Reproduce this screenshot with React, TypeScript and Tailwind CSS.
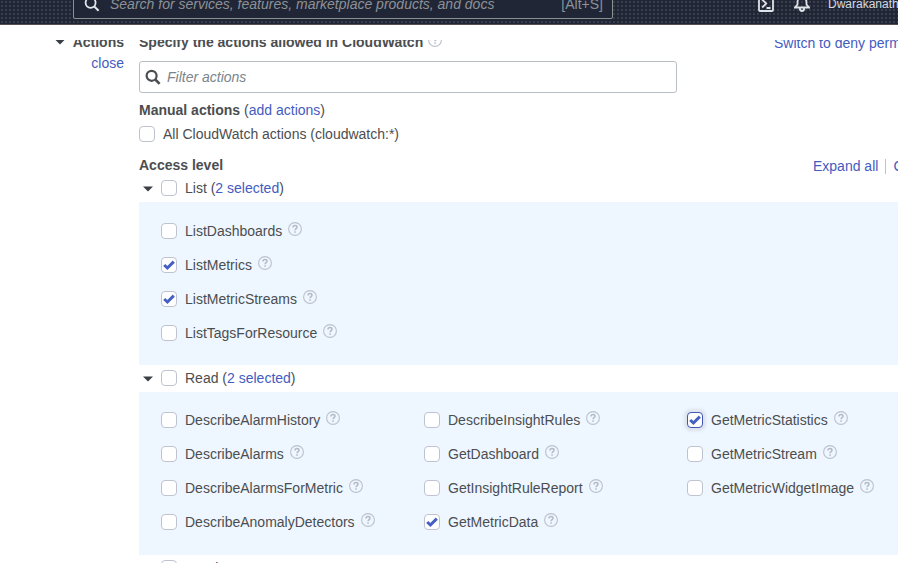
import React from "react";

const FONT = "font-['Liberation_Sans',Arial,sans-serif]";

function Help({ className = "" }: { className?: string }) {
  return (
    <svg width="14" height="14" viewBox="0 0 14 14" fill="none" className={`shrink-0 ${className}`}>
      <circle cx="7" cy="7" r="6.4" stroke="#bcc1cc" strokeWidth="1.1" />
      <path d="M5 5.5C5 4.3 5.8 3.6 7 3.6s2 .7 2 1.7c0 1.3-1.9 1.4-1.9 2.9" stroke="#b4bac6" strokeWidth="1.5" />
      <rect x="6.3" y="9.3" width="1.5" height="1.5" fill="#b4bac6" />
    </svg>
  );
}

function Box({ checked = false, focus = false }: { checked?: boolean; focus?: boolean }) {
  return (
    <span
      className={`flex size-4 shrink-0 items-center justify-center rounded-[4px] border bg-white ${
        focus ? "border-[#3f56b5] shadow-[0_0_3px_3px_#dce3ee]" : "border-[#bfc3cf]"
      }`}
    >
      {checked && (
        <svg width="12" height="12" viewBox="0 0 12 12" className="shrink-0">
          <path d="M1.2 6 4.4 9 10.8 2.6" fill="none" stroke="#4560c4" strokeWidth="3" />
        </svg>
      )}
    </span>
  );
}

function Caret({ className = "" }: { className?: string }) {
  return (
    <svg width="10" height="6" viewBox="0 0 10 6" className={`shrink-0 ${className}`}>
      <path d="M0 .5h10L5 5.5Z" fill="#3b3e43" />
    </svg>
  );
}

function Magnifier({ color, thin = false }: { color: string; thin?: boolean }) {
  return (
    <svg width="16" height="16" viewBox="0 0 16 16" fill="none" stroke={color} className="shrink-0">
      <circle cx="6.6" cy="6.8" r="5" strokeWidth={thin ? 1.8 : 2.2} />
      <path d="m10.3 10.5 4.3 4.3" strokeWidth={thin ? 2 : 2.6} />
    </svg>
  );
}

type Item = { name: string; checked?: boolean; focus?: boolean };

function Action({ name, checked, focus }: Item) {
  return (
    <div className="flex h-[34px] items-center">
      <Box checked={checked} focus={focus} />
      <span className="ml-2">{name}</span>
      <Help className="mb-1 ml-1.5" />
    </div>
  );
}

function GroupHead({ label, count }: { label: string; count?: string }) {
  return (
    <div className="flex h-[27px] shrink-0 items-center pb-px pl-1">
      <Caret className="mt-0.5" />
      <span className="ml-2">
        <Box />
      </span>
      <span className="ml-2">
        {label}
        {count && (
          <>
            {" ("}
            <span className="text-[#435cbf]">{count}</span>)
          </>
        )}
      </span>
    </div>
  );
}

const list: Item[] = [
  { name: "ListDashboards" },
  { name: "ListMetrics", checked: true },
  { name: "ListMetricStreams", checked: true },
  { name: "ListTagsForResource" },
];

const read: Item[][] = [
  [
    { name: "DescribeAlarmHistory" },
    { name: "DescribeAlarms" },
    { name: "DescribeAlarmsForMetric" },
    { name: "DescribeAnomalyDetectors" },
  ],
  [
    { name: "DescribeInsightRules" },
    { name: "GetDashboard" },
    { name: "GetInsightRuleReport" },
    { name: "GetMetricData", checked: true },
  ],
  [
    { name: "GetMetricStatistics", checked: true, focus: true },
    { name: "GetMetricStream" },
    { name: "GetMetricWidgetImage" },
  ],
];

export default function App() {
  return (
    <div className={`flex h-[563px] w-[898px] flex-col overflow-hidden bg-white text-sm leading-5 text-[#4b4e50] ${FONT}`}>
      <header className="flex h-[25px] shrink-0 items-end overflow-hidden border-b border-[#55504f] bg-[#212637] bg-[radial-gradient(circle,#484b55_0.6px,transparent_0.9px)] bg-[size:4px_4px] pb-[5px] pl-[73px]">
        <div className="flex h-[30px] w-[540px] shrink-0 items-center rounded-[2px] border border-[#8b9192] bg-[#212637] pr-[9px] pl-2.5 text-[#8c9296]">
          <Magnifier color="#e3e6ea" thin />
          <span className="ml-2.5 grow italic">Search for services, features, marketplace products, and docs</span>
          <span>[Alt+S]</span>
        </div>
        <div className="ml-[145px] flex h-[30px] shrink-0 items-center text-[#d5d9df]">
          <svg width="16" height="16" viewBox="0 0 16 16" fill="none" stroke="#dfe2e8" strokeWidth="1.8">
            <rect x="1" y="1" width="14" height="14" rx="1" />
            <path d="m4.2 3.5 4 4-4 4M8.5 12h4" />
          </svg>
          <svg width="16" height="16" viewBox="0 0 16 16" fill="none" stroke="#dfe2e8" strokeWidth="1.8" className="ml-5">
            <path d="M1 11.5h14l-2.5-3V6a4.5 4.5 0 0 0-9 0v2.500ZM5.8 12c0 4 4.400 4 4.400 0" />
          </svg>
          <span className="ml-[18px] text-[12px]">Dwarakanath</span>
        </div>
      </header>

      <main className="mt-[15px] flex grow overflow-hidden">
        <aside className="flex w-[124px] shrink-0 flex-col items-end">
          <div className="-mt-2 flex items-center font-bold">
            <Caret />
            <span className="ml-2">Actions</span>
          </div>
          <a className="mt-px text-[#435cbf]">close</a>
        </aside>

        <section className="ml-[15px] flex w-[759px] shrink-0 flex-col">
          <div className="-mt-2 flex h-5 shrink-0">
            <span className="font-bold">Specify the actions allowed in CloudWatch</span>
            <Help className="mt-px ml-[5px]" />
            <a className="mt-px ml-auto w-[124px] whitespace-nowrap text-[#435cbf]">Switch to deny permissions</a>
          </div>
          <div className="mt-[9px] flex h-8 w-[538px] shrink-0 items-center rounded-[3px] border border-[#b8bec4] pl-[5px] text-[#7b858b]">
            <Magnifier color="#4b4e50" />
            <span className="ml-1.5 italic">Filter actions</span>
          </div>
          <div className="mt-[7px]">
            <b>Manual actions</b> (<a className="text-[#435cbf]">add actions</a>)
          </div>
          <div className="mt-1 flex items-center">
            <Box />
            <span className="ml-2">All CloudWatch actions (cloudwatch:*)</span>
          </div>
          <div className="mt-[11px] flex h-5 shrink-0 items-center">
            <b>Access level</b>
            <div className="mt-0.5 ml-auto flex w-[85px] items-center whitespace-nowrap text-[#435cbf]">
              <span>Expand all</span>
              <span className="ml-[7px] h-[15px] w-px shrink-0 bg-[#bcc1cc]" />
              <span className="ml-[7px]">Collapse all</span>
            </div>
          </div>
          <GroupHead label="List" count="2 selected" />
          <div className="h-[163px] shrink-0 bg-[#eef6ff] pt-3 pl-[22px]">
            {list.map((i) => (
              <Action key={i.name} {...i} />
            ))}
          </div>
          <GroupHead label="Read" count="2 selected" />
          <div className="grid h-[163px] shrink-0 grid-cols-[263px_263px_1fr] bg-[#eef6ff] pt-[11px] pl-[22px]">
            {read.map((col, n) => (
              <div key={n}>
                {col.map((i) => (
                  <Action key={i.name} {...i} />
                ))}
              </div>
            ))}
          </div>
          <GroupHead label="Tagging" />
        </section>
      </main>
    </div>
  );
}
